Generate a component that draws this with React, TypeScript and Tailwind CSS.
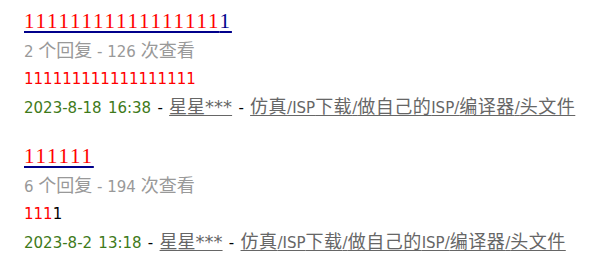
const sans = { fontFamily: '"DejaVu Sans", "Noto Sans CJK SC", sans-serif' };

interface Topic {
  titleRed: string;
  titleTail: string;
  replies: number;
  views: number;
  bodyRed: string;
  bodyTail: string;
  date: string;
}

const topics: Topic[] = [
  {
    titleRed: '11111111111111111',
    titleTail: '1',
    replies: 2,
    views: 126,
    bodyRed: '111111111111111111',
    bodyTail: '',
    date: '2023-8-18 16:38',
  },
  {
    titleRed: '111111',
    titleTail: '',
    replies: 6,
    views: 194,
    bodyRed: '111',
    bodyTail: '1',
    date: '2023-8-2 13:18',
  },
];

// CJK glyphs and asterisks run a bit larger than the latin text
function Mixed({ text, wide = false }: { text: string; wide?: boolean }) {
  const parts = text.match(/[\u4e00-\u9fff*]+|[^\u4e00-\u9fff*]+/g) ?? [];
  return (
    <>
      {parts.map((p, i) =>
        /[\u4e00-\u9fff*]/.test(p) ? (
          <span key={i} className={wide ? 'text-[18px] tracking-[0.5px]' : 'text-[18px]'}>
            {p}
          </span>
        ) : (
          <span key={i}>{p}</span>
        )
      )}
    </>
  );
}

function TopicItem({ t }: { t: Topic }) {
  return (
    <div className="mb-[21px] text-[15px] leading-[27px]" style={sans}>
      <div>
        <a
          href="#"
          className="text-[21px] tracking-[0.085em] text-[#00008b] underline decoration-[#00008b] underline-offset-[3px] font-['Liberation_Serif',serif]"
        >
          <span className="text-[#ff0000]">{t.titleRed}</span>
          {t.titleTail}
        </a>
      </div>
      <div className="text-[#999999]">
        <Mixed text={`${t.replies} 个回复 - ${t.views} 次查看`} />
      </div>
      <div className="text-black">
        <span className="text-[#ff0000]">{t.bodyRed}</span>
        {t.bodyTail}
      </div>
      <div className="text-black [word-spacing:1.5px]">
        <span className="text-[#3f7a1a]">{t.date}</span> -{' '}
        <a href="#" className="text-[#666666] underline underline-offset-2">
          <Mixed text="星星***" />
        </a>{' '}
        -{' '}
        <a href="#" className="text-[#666666] underline underline-offset-2">
          <Mixed text="仿真/ISP下载/做自己的ISP/编译器/头文件" wide />
        </a>
      </div>
    </div>
  );
}

export default function App() {
  return (
    <div className="bg-white w-[616px] h-[261px] overflow-hidden pl-6 pt-2">
      {topics.map((t, i) => (
        <TopicItem key={i} t={t} />
      ))}
    </div>
  );
}
